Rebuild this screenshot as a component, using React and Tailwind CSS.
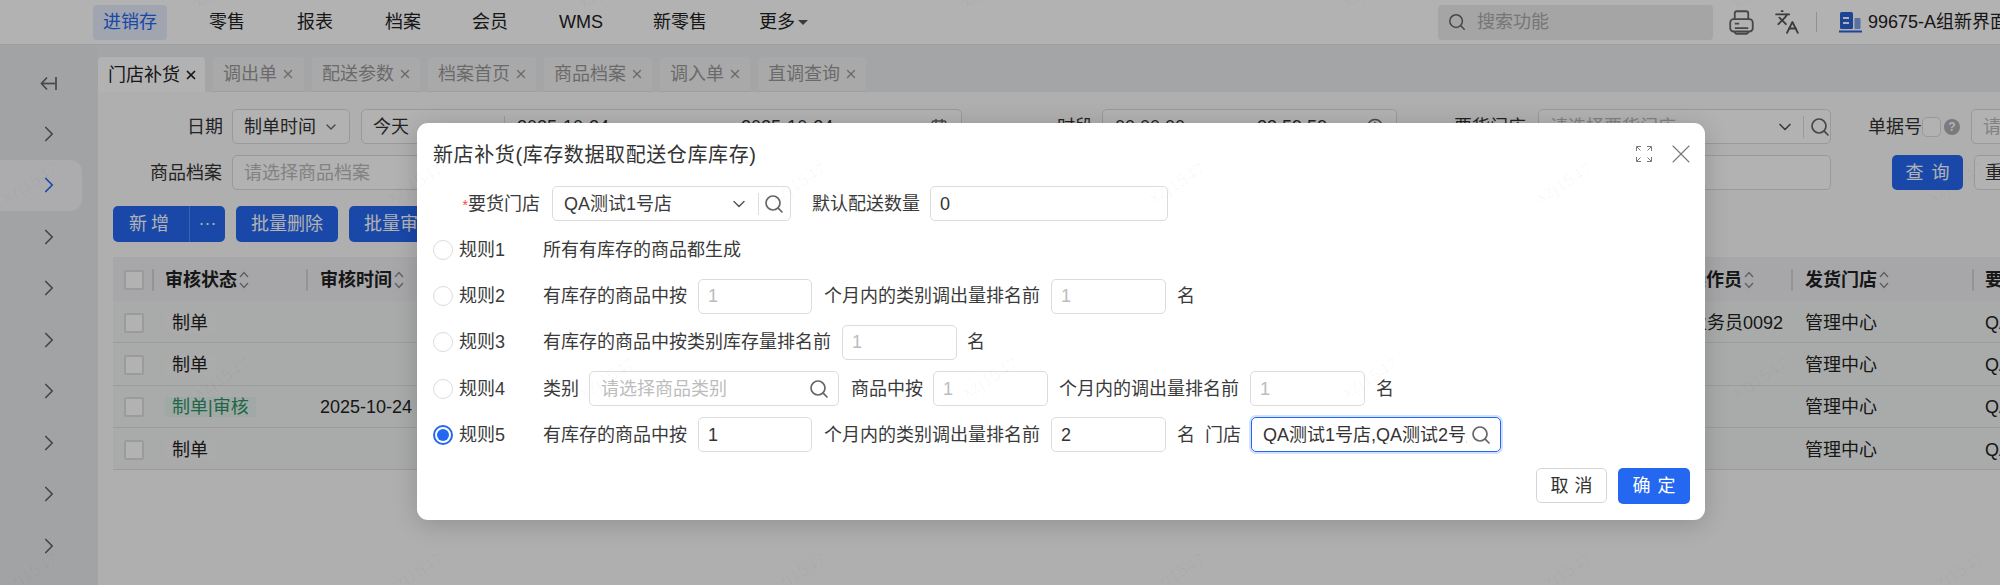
import React from "react";
import { ChevronDown, ChevronRight, X, Languages, Calendar, Clock } from "lucide-react";

const SearchIcon = ({ size = 20, color = "#666" }) => (
  <svg width={size} height={size} viewBox="0 0 20 20" fill="none" stroke={color} strokeWidth="1.7" strokeLinecap="round">
    <circle cx="9" cy="9" r="7" />
    <path d="M14.2 14.2 L18 18" />
  </svg>
);

const Sort = () => (
  <svg width="10" height="18" viewBox="0 0 10 18" fill="none" stroke="#8a8a8a" strokeWidth="1.4" className="ml-[2px] shrink-0">
    <path d="M1 6 L5 1.5 L9 6" />
    <path d="M1 12 L5 16.5 L9 12" />
  </svg>
);

const Expand = () => (
  <svg width="16" height="16" viewBox="0 0 16 16" fill="none" stroke="#777" strokeWidth="1">
    <path d="M0.5 5V0.5H5M11 0.5H15.5V5M15.5 11V15.5H11M5 15.5H0.5V11" />
    <path d="M1 1L4.5 4.5M15 1L11.5 4.5M15 15L11.5 11.5M1 15L4.5 11.5" />
  </svg>
);

const Printer = () => (
  <svg width="27" height="27" viewBox="0 0 24 24" fill="none" stroke="#666" strokeWidth="1.6" strokeLinejoin="round">
    <path d="M6 9V4a2 2 0 0 1 2-2h8a2 2 0 0 1 2 2v5" />
    <rect x="2" y="9" width="20" height="11" rx="3" />
    <path d="M6 20v0a2 2 0 0 0 2 2h8a2 2 0 0 0 2-2v0M6 17h12M6 13h4" />
  </svg>
);

const Building = () => (
  <svg width="23" height="22" viewBox="0 0 23 22">
    <rect x="1" y="1" width="13" height="17" rx="1.5" fill="#2a62d6" />
    <rect x="4" y="6" width="6" height="2" fill="#fff" />
    <rect x="4" y="11" width="6" height="2" fill="#fff" />
    <rect x="15.5" y="7" width="6" height="11" rx="1" fill="#7fa3e8" />
    <rect x="0" y="19.5" width="23" height="2" fill="#2a62d6" />
  </svg>
);

const CollapseIcon = () => (
  <svg width="18" height="15" viewBox="0 0 18 15" fill="none" stroke="#666" strokeWidth="1.7">
    <path d="M7 1.5 L1.5 7.5 L7 13.5" />
    <path d="M1.5 7.5 H15" />
    <path d="M16 1 V14" />
  </svg>
);

const Box = ({ className = "", children }) => (
  <div className={"h-[35px] shrink-0 flex items-center whitespace-nowrap rounded-[5px] border border-[#dcdcdc] bg-white " + className}>{children}</div>
);

const NumBox = ({ w, value = "1", on, className = "" }) => (
  <Box className={"pl-[9px] " + w + " " + className}>
    <span className={on ? "text-[#333]" : "text-[#bdbdbd]"}>{value}</span>
  </Box>
);

const Radio = ({ on }) =>
  on ? (
    <span className="w-[20px] h-[20px] shrink-0 rounded-full border-2 border-[#2468f2] bg-white flex items-center justify-center">
      <span className="w-[12px] h-[12px] rounded-full bg-[#2468f2]" />
    </span>
  ) : (
    <span className="w-[20px] h-[20px] shrink-0 rounded-full border border-[#dcdcdc] bg-white" />
  );

const Rule = ({ n, on, children }) => (
  <div className="flex items-center h-[35px] text-[#3a3a3a]">
    <Radio on={on} />
    <span className="ml-[6px] w-[84px] shrink-0">规则{n}</span>
    {children}
  </div>
);

const Tab = ({ label, active, w }) => (
  <div
    className={
      w + " h-[35px] shrink-0 pl-[10px] flex items-center rounded-t-[4px] " +
      (active ? "bg-white text-[#222]" : "bg-[#f2f3f4] text-[#999] border-b border-[#e3e3e3]")
    }
  >
    <span>{label}</span>
    <X size={14} strokeWidth={active ? 3 : 2.4} className="ml-[4px]" color={active ? "#222" : "#999"} />
  </div>
);

const navs = [
  ["进销存", "w-[74px] ml-[93px]"],
  ["零售", "w-[36px] ml-[42px]"],
  ["报表", "w-[36px] ml-[52px]"],
  ["档案", "w-[36px] ml-[52px]"],
  ["会员", "w-[36px] ml-[51px]"],
  ["WMS", "w-[44px] ml-[51px]"],
  ["新零售", "w-[54px] ml-[50px]"],
];

const rows = [
  { s: "制单", who: "业务员0092" },
  { s: "制单" },
  { s: "制单|审核", date: "2025-10-24", green: true },
  { s: "制单" },
];

const marks = [
  [222, -12], [607, -12], [990, -12], [1370, -12], [1760, -12],
  [30, 183], [415, 183], [798, 183], [1177, 183], [1564, 183], [1956, 183],
  [222, 378], [607, 378], [990, 378], [1370, 378], [1760, 378],
  [30, 573], [415, 573], [798, 573], [1177, 573], [1564, 573], [1956, 573],
];

const Check = () => <span className="block w-[20px] h-[20px] border-2 border-[#dedede] rounded-[2px] bg-white" />;

export default function App() {
  return (
    <div className="relative w-[2000px] h-[585px] overflow-hidden bg-white text-[18px] leading-none text-[#333] font-['Liberation_Sans','Noto_Sans_CJK_SC',sans-serif]">
      {/* top bar */}
      <header className="h-[45px] flex items-center border-b border-[#e4e4e4] bg-white">
        {navs.map(([t, c], i) => (
          <div key={t} className={c + " shrink-0 " + (i === 0 ? "h-[35px] rounded-[4px] bg-[#e6edfb] text-[#2468f2] flex items-center justify-center" : "text-center text-[#222]")}>{t}</div>
        ))}
        <div className="ml-[52px] shrink-0 flex items-center text-[#222]">
          更多
          <span className="ml-[3px] w-0 h-0 border-x-[5px] border-x-transparent border-t-[5px] border-t-[#555]" />
        </div>
        <div className="ml-[630px] shrink-0 w-[275px] h-[35px] rounded-[4px] bg-[#ececec] flex items-center pl-[10px] text-[#aaa]">
          <SearchIcon size={18} />
          <span className="ml-[11px]">搜索功能</span>
        </div>
        <div className="ml-[15px] shrink-0"><Printer /></div>
        <Languages size={26} strokeWidth={1.7} color="#555" className="ml-[19px] shrink-0" />
        <span className="ml-[16px] w-px h-[20px] bg-[#d0d0d0] shrink-0" />
        <div className="ml-[22px] shrink-0"><Building /></div>
        <span className="ml-[6px] whitespace-nowrap text-[#222]">99675-A组新界面</span>
      </header>

      <div className="flex h-[540px]">
        {/* sidebar */}
        <aside className="w-[98px] shrink-0 bg-[#e9eaed]">
          <div className="h-[63px] pt-[14px] flex items-center justify-center"><CollapseIcon /></div>
          {[0, 1, 2, 3, 4, 5, 6, 7, 8].map((i) => (
            <div key={i} className={"h-[51.5px] flex items-center justify-center " + (i === 1 ? "w-[82px] pl-[16px] rounded-r-[12px] bg-[#f6f7fa]" : "")}>
              <ChevronRight size={26} strokeWidth={1.6} color={i === 1 ? "#2468f2" : "#666"} />
            </div>
          ))}
        </aside>

        {/* main */}
        <main className="w-[1902px] shrink-0 bg-[#fbfbfb]">
          <div className="h-[47px] pt-[12px] flex gap-[8px] bg-[#ebedf0] text-[18px]">
            <Tab w="w-[107px]" label="门店补货" active />
            <Tab w="w-[91px]" label="调出单" />
            <Tab w="w-[108px]" label="配送参数" />
            <Tab w="w-[108px]" label="档案首页" />
            <Tab w="w-[108px]" label="商品档案" />
            <Tab w="w-[90px]" label="调入单" />
            <Tab w="w-[108px]" label="直调查询" />
          </div>

          {/* filters */}
          <div className="pt-[17px] flex items-center h-[52px] text-[#333]">
            <span className="ml-[89px] w-[36px] shrink-0">日期</span>
            <Box className="ml-[9px] w-[118px] pl-[11px] justify-between pr-[10px]"><span>制单时间</span><ChevronDown size={16} color="#666" /></Box>
            <Box className="ml-[11px] w-[601px] pl-[11px]">
              <span>今天</span>
              <ChevronDown size={16} color="#666" className="ml-[70px] shrink-0" />
              <span className="ml-[9px] w-px h-[22px] bg-[#dcdcdc]" />
              <span className="ml-[12px]">2025-10-24</span>
              <span className="ml-[132px]">2025-10-24</span>
              <Calendar size={18} color="#666" className="ml-[97px] shrink-0" />
            </Box>
            <span className="ml-[95px] w-[36px] shrink-0">时段</span>
            <Box className="ml-[9px] w-[295px] pl-[12px]">
              <span>00:00:00</span>
              <span className="ml-[72px]">23:59:59</span>
              <Clock size={18} color="#666" className="ml-[39px] shrink-0" />
            </Box>
            <span className="ml-[57px] w-[72px] shrink-0">要货门店</span>
            <Box className="ml-[12px] w-[293px] pl-[11px] text-[#bbb]">
              <span className="w-[231px]">请选择要货门店</span>
              <ChevronDown size={20} color="#555" className="shrink-0" />
              <span className="ml-[8px] w-px h-[22px] bg-[#dcdcdc]" />
              <span className="ml-[6px]"><SearchIcon size={20} /></span>
            </Box>
            <span className="ml-[37px] w-[54px] shrink-0">单据号</span>
            <span className="w-[19px] h-[20px] shrink-0 rounded-[5px] border border-[#dcdcdc] bg-white" />
            <span className="ml-[3px] w-[16px] h-[16px] shrink-0 rounded-full bg-[#aeb1b6] text-white text-[12px] font-bold flex items-center justify-center">?</span>
            <Box className="ml-[11px] w-[60px] pl-[11px] text-[#bbb] overflow-hidden"><span>请输入</span></Box>
          </div>
          <div className="mt-[11px] flex items-center h-[35px]">
            <span className="ml-[52px] w-[72px] shrink-0">商品档案</span>
            <Box className="ml-[10px] w-[1599px] pl-[11px] text-[#bbb]"><span>请选择商品档案</span></Box>
            <button className="ml-[61px] w-[71px] h-[35px] shrink-0 rounded-[5px] bg-[#2468f2] text-white tracking-[8px] pl-[8px]">查询</button>
            <button className="ml-[11px] w-[70px] h-[35px] shrink-0 rounded-[5px] border border-[#dcdcdc] bg-white tracking-[8px] whitespace-nowrap text-left pl-[10px]">重置</button>
          </div>

          {/* toolbar */}
          <div className="mt-[16px] ml-[15px] flex gap-[11px] h-[36px]">
            <div className="w-[112px] rounded-[5px] bg-[#2468f2] text-white flex items-center">
              <span className="w-[77px] text-center tracking-[4px] border-r border-[#5b8ff5] h-full flex items-center justify-center">新增</span>
              <span className="flex-1 text-center leading-none -mt-[2px]">···</span>
            </div>
            <div className="w-[102px] rounded-[5px] bg-[#2468f2] text-white flex items-center justify-center">批量删除</div>
            <div className="w-[102px] rounded-[5px] bg-[#2468f2] text-white flex items-center justify-center">批量审核</div>
          </div>

          {/* table */}
          <div className="mt-[15px] ml-[15px] w-[1887px]">
            <div className="h-[44px] pt-[2px] bg-[#f0f0f2] flex items-center font-bold text-[#222]">
              <div className="w-[41px] shrink-0 pl-[11px] flex items-center justify-between h-[22px] border-r-2 border-[#d4d4d4]"><Check /></div>
              <div className="w-[154px] shrink-0 pl-[11px] flex items-center h-[22px] border-r-2 border-[#d4d4d4]">审核状态<Sort /></div>
              <div className="w-[1387px] shrink-0 pl-[12px] flex items-center">审核时间<Sort /></div>
              <div className="w-[98px] shrink-0 pr-[37px] flex items-center justify-end whitespace-nowrap h-[22px] border-r-2 border-[#d4d4d4]">操作员<Sort /></div>
              <div className="w-[181px] shrink-0 pl-[12px] flex items-center h-[22px] border-r-2 border-[#d4d4d4]">发货门店<Sort /></div>
              <div className="pl-[11px] whitespace-nowrap">要货门店</div>
            </div>
            {rows.map((r, i) => (
              <div key={i} className="h-[42.3px] pt-[2px] flex items-center bg-[#f3f5f4] border-b border-[#e0e0e0] text-[#222]">
                <div className="w-[41px] shrink-0 pl-[11px]"><Check /></div>
                <div className="w-[154px] shrink-0 pl-[11px]">
                  <span className={"inline-block px-[7px] py-px " + (r.green ? "bg-[#e6f3ec] text-[#2e9268]" : "bg-[#f5f5f5]")}>{r.s}</span>
                </div>
                <div className="w-[1387px] shrink-0 pl-[12px]">{r.date}</div>
                <div className="w-[98px] shrink-0 whitespace-nowrap"><span className="inline-block -ml-[6px]">{r.who}</span></div>
                <div className="w-[181px] shrink-0 pl-[12px]">管理中心</div>
                <div className="pl-[11px] whitespace-nowrap">QA测试</div>
              </div>
            ))}
          </div>
        </main>
      </div>

      {/* mask */}
      <div className="absolute inset-0 bg-black/30" />

      {/* dialog */}
      <div className="absolute left-[417px] top-[123px] w-[1288px] h-[397px] rounded-[11px] bg-white shadow-[0_4px_24px_rgba(0,0,0,0.18)] pl-[16px] text-[#3a3a3a]">
        <div className="h-[63px] flex items-center text-[20px] tracking-[0.6px] text-[#333] relative">
          新店补货(库存数据取配送仓库库存)
          <span className="absolute left-[1203px] top-[23px]"><Expand /></span>
          <X size={32} strokeWidth={0.8} color="#777" className="absolute left-[1232px] top-[15px]" />
        </div>

        <div className="flex flex-col gap-[11.3px]">
          <div className="flex items-center h-[35px]">
            <span className="w-[119px] shrink-0 pr-[12px] text-right"><span className="text-[#f5483b] text-[14px]">*</span>要货门店</span>
            <Box className="w-[239px] pl-[11px]">
              <span className="w-[165px] shrink-0">QA测试1号店</span>
              <ChevronDown size={20} strokeWidth={1.7} color="#555" className="shrink-0" />
              <span className="ml-[9px] w-px h-[22px] bg-[#dcdcdc]" />
              <span className="ml-[5px]"><SearchIcon size={20} /></span>
            </Box>
            <span className="ml-[21px] w-[108px] shrink-0">默认配送数量</span>
            <NumBox w="w-[238px]" value="0" on className="ml-[10px]" />
          </div>

          <Rule n={1}><span>所有有库存的商品都生成</span></Rule>

          <Rule n={2}>
            <span className="w-[144px] shrink-0">有库存的商品中按</span>
            <NumBox w="w-[114px]" className="ml-[11px]" />
            <span className="ml-[12px] w-[216px] shrink-0">个月内的类别调出量排名前</span>
            <NumBox w="w-[115px]" className="ml-[11px]" />
            <span className="ml-[11px]">名</span>
          </Rule>

          <Rule n={3}>
            <span className="w-[288px] shrink-0">有库存的商品中按类别库存量排名前</span>
            <NumBox w="w-[115px]" className="ml-[11px]" />
            <span className="ml-[10px]">名</span>
          </Rule>

          <Rule n={4}>
            <span className="w-[36px] shrink-0">类别</span>
            <Box className="ml-[10px] w-[250px] pl-[11px] pr-[9px] justify-between">
              <span className="text-[#bdbdbd]">请选择商品类别</span>
              <SearchIcon size={20} />
            </Box>
            <span className="ml-[12px] w-[72px] shrink-0">商品中按</span>
            <NumBox w="w-[115px]" className="ml-[10px]" />
            <span className="ml-[11px] w-[180px] shrink-0">个月内的调出量排名前</span>
            <NumBox w="w-[115px]" className="ml-[11px]" />
            <span className="ml-[11px]">名</span>
          </Rule>

          <Rule n={5} on>
            <span className="w-[144px] shrink-0">有库存的商品中按</span>
            <NumBox w="w-[114px]" value="1" on className="ml-[11px]" />
            <span className="ml-[12px] w-[216px] shrink-0">个月内的类别调出量排名前</span>
            <NumBox w="w-[115px]" value="2" on className="ml-[11px]" />
            <span className="ml-[11px] w-[18px] shrink-0">名</span>
            <span className="ml-[10px] w-[36px] shrink-0">门店</span>
            <div className="ml-[10px] w-[250px] h-[35px] shrink-0 flex items-center rounded-[5px] border border-[#2468f2] shadow-[0_0_0_2px_rgba(36,104,242,0.2)] pl-[11px]">
              <span className="w-[204px] shrink-0 overflow-hidden whitespace-nowrap text-[#333]">QA测试1号店,QA测试2号店</span>
              <span className="ml-[4px]"><SearchIcon size={20} /></span>
            </div>
          </Rule>
        </div>

        <div className="mt-[16px] pr-[15px] flex justify-end gap-[11px]">
          <button className="w-[71px] h-[35px] rounded-[5px] border border-[#d5d5d5] bg-white text-[#333] tracking-[6px] pl-[6px]">取消</button>
          <button className="w-[72px] h-[36px] rounded-[5px] bg-[#2468f2] text-white tracking-[7px] pl-[7px]">确定</button>
        </div>
      </div>

      {/* watermark */}
      {marks.map(([x, y], i) => (
        <span
          key={i}
          className="absolute -rotate-[30deg] -translate-x-1/2 -translate-y-1/2 text-[18px] text-black/[0.03] pointer-events-none"
          style={{ left: x, top: y }}
        >
          xzj1547
        </span>
      ))}
    </div>
  );
}
